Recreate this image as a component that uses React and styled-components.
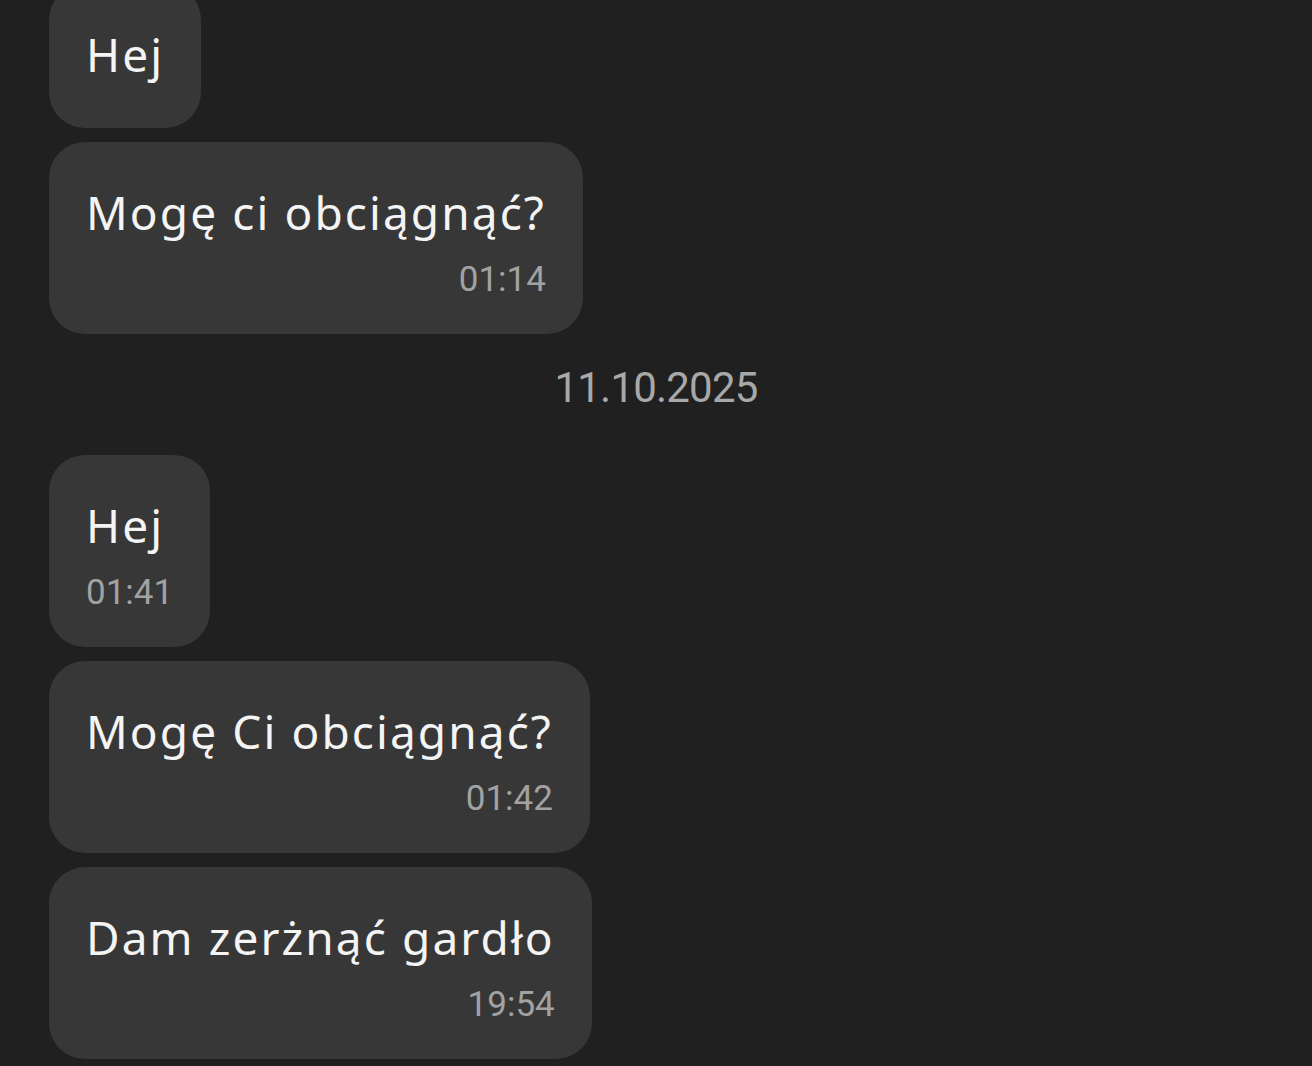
import React from 'react';
import styled, { createGlobalStyle } from 'styled-components';

const Global = createGlobalStyle`
  html, body { margin: 0; padding: 0; background: #202020; }
  body { height: 1066px; overflow: hidden; }
`;

const Thread = styled.div`
  display: flex;
  flex-direction: column;
  align-items: flex-start;
  gap: 14px;
  padding-left: 49px;
  margin-top: -16px;
`;

const Bubble = styled.div`
  display: flex;
  flex-direction: column;
  background: #373737;
  border-radius: 36px;
  padding: 42px 37px ${p => (p.$hasTime ? 34 : 46)}px;
`;

const Text = styled.div`
  font-family: "Noto Sans", sans-serif;
  font-size: 46px;
  line-height: 56px;
  letter-spacing: 2.1px;
  color: #f4f4f4;
  white-space: nowrap;
`;

const Time = styled.div`
  align-self: flex-end;
  margin-top: 20px;
  font-family: Roboto, sans-serif;
  font-size: 35px;
  line-height: 40px;
  color: #a2a2a2;
`;

const DateRow = styled.div`
  align-self: stretch;
  margin: 16px 0 29px -49px;
  text-align: center;
  font-family: Roboto, sans-serif;
  font-size: 42px;
  line-height: 48px;
  letter-spacing: -0.8px;
  color: #a8a8a8;
`;

const Message = ({ text, time }) => (
  <Bubble $hasTime={!!time}>
    <Text>{text}</Text>
    {time && <Time>{time}</Time>}
  </Bubble>
);

export default function App() {
  return (
    <>
      <Global />
      <Thread>
        <Message text="Hej" />
        <Message text="Mogę ci obciągnąć?" time="01:14" />
        <DateRow>11.10.2025</DateRow>
        <Message text="Hej" time="01:41" />
        <Message text="Mogę Ci obciągnąć?" time="01:42" />
        <Message text="Dam zerżnąć gardło" time="19:54" />
      </Thread>
    </>
  );
}
